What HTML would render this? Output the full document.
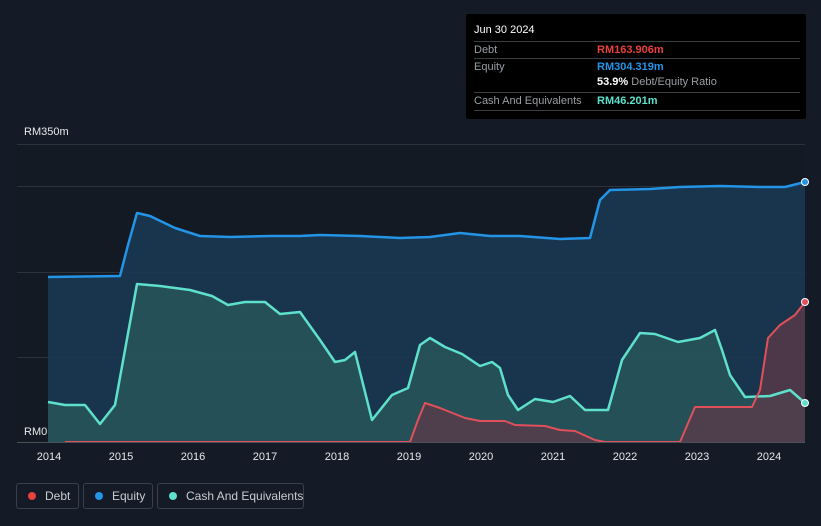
<!DOCTYPE html>
<html><head><meta charset="utf-8"><style>
body{margin:0;background:#151b26;font-family:"Liberation Sans",sans-serif;}
.wrap{position:relative;width:821px;height:526px;overflow:hidden;background:#151b26;}
.tt{position:absolute;left:466px;top:14px;width:340px;height:105px;background:#000;border-radius:2px;font-size:11px;color:#9a9ea4;}
.tt .r{position:absolute;left:8px;right:6px;border-top:1px solid #3a3d42;height:17px;line-height:17px;}
.leg{position:absolute;top:483px;height:26px;border:1px solid #3a404b;border-radius:3px;color:#c8ccd2;font-size:12px;line-height:24px;box-sizing:border-box;white-space:nowrap;}
.leg i{position:absolute;top:8px;width:8px;height:8px;border-radius:50%;}
</style></head><body><div class="wrap">
<svg width="821" height="526" style="position:absolute;left:0;top:0">
<rect x="17" y="144" width="788" height="298" fill="#141a24"/>
<g stroke="#2c323c" stroke-width="1">
<line x1="17" y1="144.5" x2="805" y2="144.5"/><line x1="17" y1="186.5" x2="805" y2="186.5"/><line x1="17" y1="272.5" x2="805" y2="272.5"/><line x1="17" y1="357.5" x2="805" y2="357.5"/>
</g>
<path d="M48,277 L120,276 L128,245 L137,213 L150,216 L175,228 L200,236 L230,237 L270,236 L300,236 L320,235 L360,236 L400,238 L430,237 L460,233 L490,236 L520,236 L560,239 L590,238 L600,200 L610,190 L650,189 L680,187 L720,186 L760,187 L785,187 L805,182 L805,442 L48,442 Z" fill="#1a3a55" opacity="0.85"/>
<path d="M48,402 L65,405 L85,405 L100,424 L115,405 L125,350 L137,284 L160,286 L190,290 L212,296 L228,305 L245,302 L265,302 L280,314 L300,312 L320,340 L335,362 L345,360 L355,352 L362,380 L372,420 L392,395 L408,388 L420,345 L430,338 L445,347 L462,354 L480,366 L492,362 L500,368 L508,395 L518,410 L535,399 L553,402 L570,396 L585,410 L608,410 L622,360 L640,333 L655,334 L678,342 L700,338 L715,330 L722,350 L730,375 L745,397 L770,396 L790,390 L805,403 L805,442 L48,442 Z" fill="#2a5a5c" opacity="0.75"/>
<path d="M410,442 L418,420 L425,403 L440,408 L465,418 L480,421 L505,421 L515,425 L545,426 L560,430 L575,431 L595,440 L605,442 L680,442 L695,407 L752,407 L760,390 L768,338 L780,325 L795,315 L805,302 L805,442 Z" fill="#5a3a48" opacity="0.8"/>
<path d="M48,277 L120,276 L128,245 L137,213 L150,216 L175,228 L200,236 L230,237 L270,236 L300,236 L320,235 L360,236 L400,238 L430,237 L460,233 L490,236 L520,236 L560,239 L590,238 L600,200 L610,190 L650,189 L680,187 L720,186 L760,187 L785,187 L805,182" fill="none" stroke="#2394e6" stroke-width="2.5" stroke-linejoin="round"/>
<path d="M48,402 L65,405 L85,405 L100,424 L115,405 L125,350 L137,284 L160,286 L190,290 L212,296 L228,305 L245,302 L265,302 L280,314 L300,312 L320,340 L335,362 L345,360 L355,352 L362,380 L372,420 L392,395 L408,388 L420,345 L430,338 L445,347 L462,354 L480,366 L492,362 L500,368 L508,395 L518,410 L535,399 L553,402 L570,396 L585,410 L608,410 L622,360 L640,333 L655,334 L678,342 L700,338 L715,330 L722,350 L730,375 L745,397 L770,396 L790,390 L805,403" fill="none" stroke="#5ee0cc" stroke-width="2.5" stroke-linejoin="round"/>
<path d="M65,442 L410,442 L418,420 L425,403 L440,408 L465,418 L480,421 L505,421 L515,425 L545,426 L560,430 L575,431 L595,440 L605,442 L680,442 L695,407 L752,407 L760,390 L768,338 L780,325 L795,315 L805,302" fill="none" stroke="#e0505a" stroke-width="2" stroke-linejoin="round"/>
<line x1="17" y1="442.5" x2="805" y2="442.5" stroke="#4a5058"/>
<circle cx="805" cy="182" r="3.5" fill="#2394e6" stroke="#fff" stroke-width="1"/>
<circle cx="805" cy="302" r="3.5" fill="#e0505a" stroke="#fff" stroke-width="1"/>
<circle cx="805" cy="403" r="3.5" fill="#5ee0cc" stroke="#fff" stroke-width="1"/>
<g fill="#e6e8ea" font-size="11" font-family="Liberation Sans">
<text x="24" y="135">RM350m</text><text x="24" y="435">RM0</text>
<g text-anchor="middle"><text x="49" y="460">2014</text><text x="121" y="460">2015</text><text x="193" y="460">2016</text><text x="265" y="460">2017</text><text x="337" y="460">2018</text><text x="409" y="460">2019</text><text x="481" y="460">2020</text><text x="553" y="460">2021</text><text x="625" y="460">2022</text><text x="697" y="460">2023</text><text x="769" y="460">2024</text></g>
</g>
</svg>
<div class="tt">
<div style="position:absolute;left:8px;top:10px;color:#fff;">Jun 30 2024</div>
<div class="r" style="top:27px">Debt<span style="position:absolute;left:123px;color:#e8413f;font-weight:bold">RM163.906m</span></div>
<div class="r" style="top:44px">Equity<span style="position:absolute;left:123px;color:#2394e6;font-weight:bold">RM304.319m</span></div>
<div style="position:absolute;left:131px;top:62px;"><b style="color:#fff">53.9%</b> Debt/Equity Ratio</div>
<div class="r" style="top:78px">Cash And Equivalents<span style="position:absolute;left:123px;color:#5ee0cc;font-weight:bold">RM46.201m</span></div>
<div class="r" style="top:96px;height:0"></div>
</div>
<div class="leg" style="left:16px;width:63px"><i style="left:11px;background:#e8413f"></i><span style="position:absolute;left:28px">Debt</span></div>
<div class="leg" style="left:83px;width:70px"><i style="left:11px;background:#2394e6"></i><span style="position:absolute;left:28px">Equity</span></div>
<div class="leg" style="left:157px;width:147px"><i style="left:11px;background:#5ee0cc"></i><span style="position:absolute;left:28px">Cash And Equivalents</span></div>
</div></body></html>
